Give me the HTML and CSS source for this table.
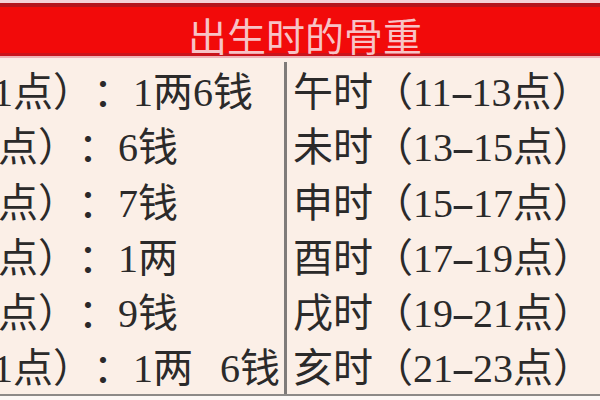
FILE: index.html
```html
<!DOCTYPE html>
<html lang="zh-CN">
<head>
<meta charset="utf-8">
<title>出生时的骨重</title>
<link rel="stylesheet" href="styles.css">
</head>
<body>
<div class="sheet">
  <div class="top-strip"></div>
  <div class="header"><span class="title">出生时的骨重</span></div>
  <div class="header-edge"></div>
  <div class="grid">
    <div class="cell left"><span class="txt shift-a"><span class="num">1</span>点）：<span class="num">1</span>两<span class="num">6</span>钱</span></div>
    <div class="cell right"><span class="txt">午时（<span class="num">11<span class="dash">-</span>13</span>点）</span></div>
    <div class="cell left"><span class="txt shift-b">点）：<span class="num">6</span>钱</span></div>
    <div class="cell right"><span class="txt">未时（<span class="num">13<span class="dash">-</span>15</span>点）</span></div>
    <div class="cell left"><span class="txt shift-b">点）：<span class="num">7</span>钱</span></div>
    <div class="cell right"><span class="txt">申时（<span class="num">15<span class="dash">-</span>17</span>点）</span></div>
    <div class="cell left"><span class="txt shift-b">点）：<span class="num">1</span>两</span></div>
    <div class="cell right"><span class="txt">酉时（<span class="num">17<span class="dash">-</span>19</span>点）</span></div>
    <div class="cell left"><span class="txt shift-b">点）：<span class="num">9</span>钱</span></div>
    <div class="cell right"><span class="txt">戌时（<span class="num">19<span class="dash">-</span>21</span>点）</span></div>
    <div class="cell left"><span class="txt shift-a wide"><span class="num">1</span>点）：<span class="num">1</span>两 <span class="num">6</span>钱</span></div>
    <div class="cell right"><span class="txt">亥时（<span class="num">21<span class="dash">-</span>23</span>点）</span></div>
  </div>
</div>
</body>
</html>
```

FILE: styles.css
```css
html, body {
  margin: 0;
  padding: 0;
  background: #fcf8f6;
}

.sheet {
  width: 600px;
  height: 400px;
  overflow: hidden;
  display: flex;
  flex-direction: column;
  font-family: "Noto Sans CJK SC", sans-serif;
  text-spacing-trim: space-all;
}

.top-strip {
  height: 3px;
  background: #f4d2d9;
}

.header {
  height: 46px;
  border-top: 4px solid #b3141e;
  border-bottom: 3px solid #c9141c;
  background: #f20a0a;
  display: flex;
  justify-content: center;
  align-items: flex-end;
}

.title {
  font-size: 39px;
  line-height: 46px;
  color: #f7c3c6;
  margin-left: 10px;
  position: relative;
  top: 4px;
}

.header-edge {
  height: 2px;
  background: #efb3b8;
}

.grid {
  display: grid;
  grid-template-columns: 287px 313px;
  grid-template-rows: repeat(6, 55.3px);
  padding-top: 4px;
  background: #fbefe7;
  border-bottom: 2px solid #8d8a88;
}

.cell {
  white-space: nowrap;
  font-size: 40px;
  line-height: 55px;
  color: #2b2a2a;
}

.left {
  border-right: 3px solid #7f7b79;
}

.right {
  padding-left: 6px;
}

.txt {
  display: inline-block;
}

.num {
  font-family: "Liberation Serif", serif;
}

.shift-a {
  margin-left: -7px;
}

.shift-b {
  margin-left: -2px;
}

.wide {
  word-spacing: 18px;
}

.dash {
  display: inline-block;
  width: 0.5em;
  text-align: center;
  transform: scaleX(1.8);
}
```
